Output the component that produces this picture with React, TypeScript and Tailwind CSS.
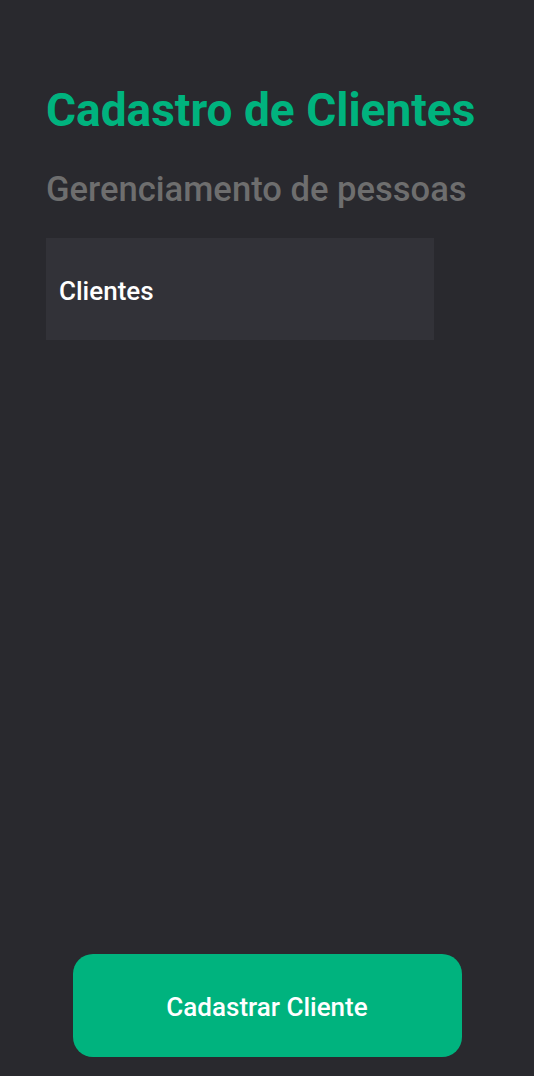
import React from "react";

export default function App() {
  return (
    <div
      className="w-full h-[1076px] bg-[#29292e] flex flex-col"
      style={{ fontFamily: "Roboto, 'Noto Sans', sans-serif" }}
    >
      <div className="flex-1 flex flex-col pl-[46px] pt-[88px]">
        <h1 className="text-[46px] leading-[45px] font-bold text-[#00b37e]">Cadastro de Clientes</h1>
        <p className="mt-[39px] text-[34.6px] leading-[35px] font-medium text-[#6e6e6e]">Gerenciamento de pessoas</p>
        <div className="mt-[31px] w-[388px] h-[102px] bg-[#323238] flex items-center pl-[13px] pt-[4px]">
          <span className="text-[26px] font-medium text-white">Clientes</span>
        </div>
      </div>
      <div className="flex justify-center pb-[19px]">
        <button className="w-[389px] h-[103px] rounded-[20px] bg-[#00b37e] text-white text-[26px] font-medium pt-[4px]">
          Cadastrar Cliente
        </button>
      </div>
    </div>
  );
}
